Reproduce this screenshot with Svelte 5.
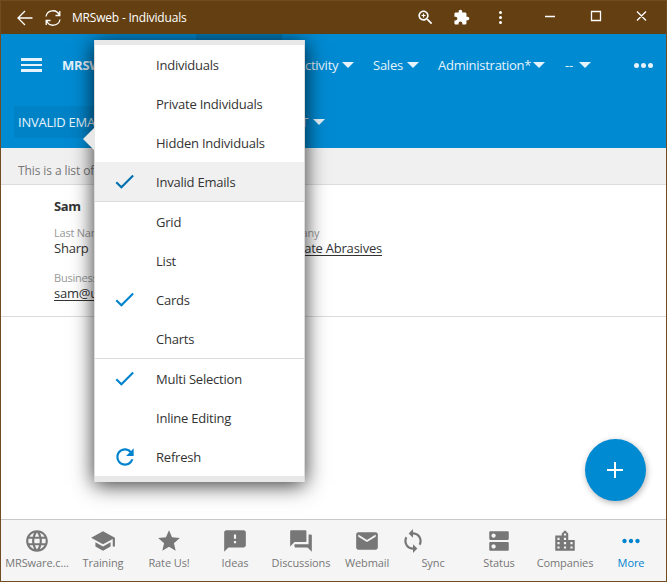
<script>
	const nav = [
		{ label: "Activity", cls: "activity" },
		{ label: "Sales", cls: "sales" },
		{ label: "Administration*", cls: "admin" },
		{ label: "--", cls: "blank" },
	];

	const groups = [
		[
			{ label: "Individuals" },
			{ label: "Private Individuals" },
			{ label: "Hidden Individuals" },
			{ label: "Invalid Emails", icon: "check", selected: true },
		],
		[
			{ label: "Grid" },
			{ label: "List" },
			{ label: "Cards", icon: "check" },
			{ label: "Charts" },
		],
		[
			{ label: "Multi Selection", icon: "check" },
			{ label: "Inline Editing" },
			{ label: "Refresh", icon: "refresh" },
		],
	];

	const icons = {
		check: "M9 16.17L4.83 12l-1.42 1.41L9 19 21 7l-1.41-1.41z",
		refresh:
			"M17.65 6.35C16.2 4.9 14.21 4 12 4c-4.42 0-7.99 3.58-7.99 8s3.57 8 7.99 8c3.73 0 6.84-2.55 7.73-6h-2.08c-.82 2.33-3.04 4-5.65 4-3.31 0-6-2.69-6-6s2.69-6 6-6c1.66 0 3.14.69 4.22 1.78L13 11h7V4l-2.35 2.35z",
		globe:
			"M11.99 2C6.47 2 2 6.48 2 12s4.47 10 9.99 10C17.52 22 22 17.52 22 12S17.52 2 11.99 2zm6.93 6h-2.95c-.32-1.25-.78-2.45-1.38-3.56 1.84.63 3.37 1.91 4.33 3.56zM12 4.04c.83 1.2 1.48 2.53 1.91 3.96h-3.82c.43-1.43 1.08-2.76 1.91-3.96zM4.26 14C4.1 13.36 4 12.69 4 12s.1-1.36.26-2h3.38c-.08.66-.14 1.32-.14 2 0 .68.06 1.34.14 2H4.26zm.82 2h2.95c.32 1.25.78 2.45 1.38 3.56-1.84-.63-3.37-1.9-4.33-3.56zm2.95-8H5.08c.96-1.66 2.49-2.93 4.33-3.56C8.81 5.55 8.35 6.75 8.03 8zM12 19.96c-.83-1.2-1.48-2.53-1.91-3.96h3.82c-.43 1.43-1.08 2.76-1.91 3.96zM14.34 14H9.66c-.09-.66-.16-1.32-.16-2 0-.68.07-1.35.16-2h4.68c.09.65.16 1.32.16 2 0 .68-.07 1.34-.16 2zm.25 5.56c.6-1.11 1.06-2.31 1.38-3.56h2.95c-.96 1.65-2.49 2.93-4.33 3.56zM16.36 14c.08-.66.14-1.32.14-2 0-.68-.06-1.34-.14-2h3.38c.16.64.26 1.31.26 2s-.1 1.36-.26 2h-3.38z",
		school: "M5 13.18v4L12 21l7-3.82v-4L12 17l-7-3.82zM12 3L1 9l11 6 9-4.91V17h2V9L12 3z",
		star: "M12 17.27L18.18 21l-1.64-7.03L22 9.24l-7.19-.61L12 2 9.19 8.63 2 9.24l5.46 4.73L5.82 21z",
		feedback:
			"M20 2H4c-1.1 0-1.99.9-1.99 2L2 22l4-4h14c1.1 0 2-.9 2-2V4c0-1.1-.9-2-2-2zm-7 12h-2v-2h2v2zm0-4h-2V6h2v4z",
		forum:
			"M21 6h-2v9H6v2c0 .55.45 1 1 1h11l4 4V7c0-.55-.45-1-1-1zm-4 6V3c0-.55-.45-1-1-1H3c-.55 0-1 .45-1 1v14l4-4h10c.55 0 1-.45 1-1z",
		mail: "M20 4H4c-1.1 0-1.99.9-1.99 2L2 18c0 1.1.9 2 2 2h16c1.1 0 2-.9 2-2V6c0-1.1-.9-2-2-2zm0 4l-8 5-8-5V6l8 5 8-5v2z",
		sync: "M12 4V1L8 5l4 4V6c3.31 0 6 2.69 6 6 0 1.01-.25 1.97-.7 2.8l1.46 1.46C19.54 15.03 20 13.57 20 12c0-4.42-3.58-8-8-8zm0 14c-3.31 0-6-2.69-6-6 0-1.01.25-1.97.7-2.8L5.24 7.74C4.46 8.97 4 10.43 4 12c0 4.42 3.58 8 8 8v3l4-4-4-4v3z",
		dns: "M20 13H4c-.55 0-1 .45-1 1v6c0 .55.45 1 1 1h16c.55 0 1-.45 1-1v-6c0-.55-.45-1-1-1zM7 19c-1.1 0-2-.9-2-2s.9-2 2-2 2 .9 2 2-.9 2-2 2zM20 3H4c-.55 0-1 .45-1 1v6c0 .55.45 1 1 1h16c.55 0 1-.45 1-1V4c0-.55-.45-1-1-1zM7 9c-1.1 0-2-.9-2-2s.9-2 2-2 2 .9 2 2-.9 2-2 2z",
		city: "M15 11V5l-3-3-3 3v2H3v14h18V11h-6zm-8 8H5v-2h2v2zm0-4H5v-2h2v2zm0-4H5V9h2v2zm6 8h-2v-2h2v2zm0-4h-2v-2h2v2zm0-4h-2V9h2v2zm0-4h-2V5h2v2zm6 12h-2v-2h2v2zm0-4h-2v-2h2v2z",
		more: "M6 10c-1.1 0-2 .9-2 2s.9 2 2 2 2-.9 2-2-.9-2-2-2zm12 0c-1.1 0-2 .9-2 2s.9 2 2 2 2-.9 2-2-.9-2-2-2zm-6 0c-1.1 0-2 .9-2 2s.9 2 2 2 2-.9 2-2-.9-2-2-2z",
		extension:
			"M20.5 11H19V7c0-1.1-.9-2-2-2h-4V3.5C13 2.12 11.88 1 10.5 1S8 2.12 8 3.5V5H4c-1.1 0-1.99.9-1.99 2v3.8H3.5c1.49 0 2.7 1.21 2.7 2.7s-1.21 2.7-2.7 2.7H2V20c0 1.1.9 2 2 2h3.8v-1.5c0-1.49 1.21-2.7 2.7-2.7 1.49 0 2.7 1.21 2.7 2.7V22H17c1.1 0 2-.9 2-2v-4h1.5c1.38 0 2.5-1.12 2.5-2.5S21.88 11 20.5 11z",
		zoom: "M15.5 14h-.79l-.28-.27C15.41 12.59 16 11.11 16 9.5 16 5.91 13.09 3 9.5 3S3 5.91 3 9.5 5.91 16 9.5 16c1.61 0 3.09-.59 4.23-1.57l.27.28v.79l5 4.99L20.49 19l-4.99-5zm-6 0C7.01 14 5 11.99 5 9.5S7.01 5 9.5 5 14 7.01 14 9.5 11.99 14 9.5 14zM10.25 7h-1.5v1.75H7v1.5h1.75V12h1.5v-1.75H12v-1.5h-1.75z",
	};

	const tabs = [
		{ label: "MRSware.c...", icon: "globe" },
		{ label: "Training", icon: "school" },
		{ label: "Rate Us!", icon: "star" },
		{ label: "Ideas", icon: "feedback" },
		{ label: "Discussions", icon: "forum" },
		{ label: "Webmail", icon: "mail" },
		{ label: "Sync", icon: "sync" },
		{ label: "Status", icon: "dns" },
		{ label: "Companies", icon: "city" },
		{ label: "More", icon: "more", active: true },
	];
</script>

{#snippet icon(name, size)}
	<svg class="icon" width={size} height={size} viewBox="0 0 24 24">
		<path d={icons[name]} />
	</svg>
{/snippet}

<div class="window">
	<header class="titlebar">
		<svg class="back" width="16" height="16" viewBox="0 0 16 16">
			<path d="M15.500 8H1M8 1L1 8l7 7" />
		</svg>
		<svg class="reload" width="16" height="16" viewBox="0 0 16 16">
			<path d="M1 6.500A7 7 0 0 1 14.300 5M14.800 1v4.500H10.500M15 9.500A7 7 0 0 1 1.700 11M1.200 15v-4.500H5.500" />
		</svg>
		<span class="title">MRSweb - Individuals</span>
		<span class="tool zoom">{@render icon("zoom", 19)}</span>
		<span class="tool puzzle">{@render icon("extension", 17)}</span>
		<span class="dots"><i></i><i></i><i></i></span>
		<svg class="controls" width="104" height="12" viewBox="0 0 104 12">
			<path d="M0 6.500h10M46.500 1.500h9v9h-9zM92 1.500l9 9M101 1.500l-9 9" />
		</svg>
	</header>

	<div class="toolbar">
		<div class="navbar">
			<span class="burger"><i></i><i></i><i></i></span>
			<strong class="brand">MRSWEB</strong>
			<span class="current"></span>
			<nav>
				{#each nav as item}
					<span class="nav {item.cls}">
						<span class="nav-label">{item.label}</span><i class="caret"></i>
					</span>
				{/each}
			</nav>
			<span class="overflow"><i></i><i></i><i></i></span>
		</div>
		<div class="actions">
			<span class="view">INVALID EMAILS</span>
			<span class="report">REPORT <i class="caret"></i></span>
		</div>
	</div>

	<div class="summary">This is a list of</div>

	<main>
		<article class="card">
			<h2>Sam</h2>
			<div class="fields">
				<div class="field">
					<label>Last Name</label>
					<span>Sharp</span>
				</div>
				<div class="field company">
					<label>Company</label>
					<span class="link">Ultimate Abrasives</span>
				</div>
				<div class="field">
					<label>Business</label>
					<span class="link">sam@ultimate</span>
				</div>
			</div>
		</article>
	</main>

	<footer>
		{#each tabs as tab}
			<div class="tab {tab.icon}" class:active={tab.active}>
				{@render icon(tab.icon, 26)}
				<span>{tab.label}</span>
			</div>
		{/each}
	</footer>

	<button class="add" aria-label="Add">
		<svg width="16" height="16" viewBox="0 0 16 16"><path d="M8 0v16M0 8h16" /></svg>
	</button>

	<div class="popup">
		<i class="pointer"></i>
		{#each groups as group}
			<ul>
				{#each group as item}
					<li class:selected={item.selected}>
						<span class="mark">
							{#if item.icon}{@render icon(item.icon, item.icon === "check" ? 25 : 26)}{/if}
						</span>
						<span>{item.label}</span>
					</li>
				{/each}
			</ul>
		{/each}
	</div>
</div>

<style>
	:global(body) {
		margin: 0;
	}

	.window {
		position: relative;
		box-sizing: border-box;
		width: 667px;
		height: 582px;
		overflow: hidden;
		display: flex;
		flex-direction: column;
		border: 1px solid #6f4d20;
		background: #fff;
		color: #333;
		font: 13px/18px "Open Sans", "Noto Sans", sans-serif;
		letter-spacing: -0.22px;
		white-space: nowrap;
	}

	svg {
		display: block;
		flex: none;
	}

	.icon {
		fill: currentColor;
	}

	.titlebar {
		position: relative;
		z-index: 2;
		display: flex;
		align-items: center;
		height: 33px;
		flex: none;
		background: #643f12;
		color: #fff;
	}

	.titlebar svg:not(.icon) {
		fill: none;
		stroke: #fff;
		stroke-width: 1.3;
	}

	.back {
		margin-left: 16px;
	}

	.reload {
		margin-left: 12px;
	}

	.title {
		width: 344px;
		margin-left: 11px;
		font-size: 12px;
		letter-spacing: -0.2px;
	}

	.puzzle {
		margin-left: 18px;
	}

	.dots {
		display: grid;
		gap: 2px;
		margin-left: 29px;
	}

	.dots i {
		width: 3px;
		height: 3px;
		border-radius: 50%;
		background: #fff;
	}

	.titlebar .controls {
		margin: 0 0 4px 43px;
		stroke-width: 1;
	}

	.toolbar {
		height: 114px;
		flex: none;
		background: #008ad2;
		color: #e6f3fb;
	}

	.navbar {
		display: flex;
		align-items: center;
		height: 62px;
	}

	.burger {
		display: grid;
		gap: 3px;
		width: 21px;
		margin-left: 20px;
	}

	.burger i {
		height: 2.5px;
		background: #e6f3fb;
	}

	.brand {
		width: 114px;
		margin-left: 20px;
	}

	.current {
		width: 86px;
		height: 62px;
		margin-left: 20px;
		background: #007bbc;
	}

	nav {
		display: flex;
		width: 337px;
		margin-left: 15px;
	}

	.nav {
		display: flex;
		align-items: center;
		justify-content: space-between;
		box-sizing: border-box;
	}

	.nav-label {
		letter-spacing: -0.25px;
	}

	.caret {
		display: inline-block;
		border: 6px solid transparent;
		border-top-color: #e6f3fb;
		border-bottom: 0;
	}

	.activity {
		width: 57px;
		margin-right: 19px;
	}

	.sales {
		width: 46px;
		margin-right: 19px;
	}

	.admin {
		width: 107px;
		margin-right: 20px;
	}

	.blank {
		width: 26px;
	}

	.overflow {
		display: flex;
		gap: 2px;
	}

	.overflow i {
		width: 5px;
		height: 5px;
		border-radius: 50%;
		background: #e6f3fb;
	}

	.actions {
		display: flex;
		align-items: center;
		height: 32px;
		margin: 10px 0 0 13px;
	}

	.view {
		width: 180px;
		padding-left: 4px;
		line-height: 32px;
		background: #0082c6;
		letter-spacing: -0.25px;
	}

	.report {
		display: flex;
		align-items: center;
		justify-content: space-between;
		width: 64px;
		margin-left: 63px;
	}

	.summary {
		height: 36px;
		flex: none;
		padding-left: 17px;
		border-bottom: 1px solid #dcdcdc;
		background: #f0f0f0;
		color: #777;
		font-size: 12px;
		line-height: 45px;
		letter-spacing: -0.1px;
	}

	main {
		flex: 1;
	}

	.card {
		box-sizing: border-box;
		height: 132px;
		padding: 12px 0 0 53px;
		border-bottom: 1px solid #dcdcdc;
	}

	h2 {
		margin: 0;
		font-size: 13px;
		line-height: 18px;
		letter-spacing: -0.4px;
	}

	.fields {
		display: grid;
		grid-template-columns: 218px 110px;
		row-gap: 14px;
		margin-top: 10px;
	}

	.field {
		display: flex;
		flex-direction: column;
		align-items: flex-start;
	}

	label {
		color: #999;
		font-size: 11px;
		line-height: 16px;
	}

	.field span {
		line-height: 15px;
	}

	.company span {
		align-self: flex-end;
	}

	.link {
		text-decoration: underline;
		text-underline-offset: 2px;
	}

	footer {
		display: grid;
		grid-template-columns: repeat(10, 66px);
		justify-content: center;
		box-sizing: border-box;
		height: 62px;
		padding: 8px 0 0 1px;
		border-top: 1px solid #c8c8c8;
		background: #f5f5f5;
		color: #777;
		font-size: 11px;
		line-height: 17px;
		letter-spacing: -0.1px;
	}

	.tab {
		display: flex;
		flex-direction: column;
		align-items: center;
	}

	.sync .icon {
		margin-right: 40px;
	}

	.active {
		color: #0083ce;
	}

	.add {
		position: absolute;
		left: 584px;
		top: 438px;
		display: flex;
		align-items: center;
		justify-content: center;
		width: 61px;
		height: 62px;
		padding: 0 1px 0 0;
		border: 0;
		border-radius: 50%;
		background: #008ad2;
		box-shadow: 1px 2px 6px rgba(0, 0, 0, 0.3);
	}

	.add path {
		stroke: #fff;
		stroke-width: 2;
	}

	.popup {
		position: absolute;
		left: 93px;
		top: 39px;
		z-index: 3;
		box-sizing: border-box;
		width: 211px;
		height: 442px;
		padding: 5px 0;
		border: solid #dcdcdc;
		border-width: 0 1px;
		background: #e8e8e8;
		box-shadow: 0 3px 20px rgba(0, 0, 0, 0.8);
		clip-path: inset(-6px -40px -40px);
	}

	.pointer {
		position: absolute;
		left: -12px;
		top: 87px;
		border: 12px solid transparent;
		border-left: 0;
		border-right-color: #e8e8e8;
	}

	ul {
		margin: 0;
		padding: 0;
		background: #fff;
		list-style: none;
	}

	ul + ul {
		border-top: 1px solid #dcdcdc;
	}

	li {
		display: flex;
		align-items: center;
		height: 39px;
	}

	.mark {
		width: 44px;
		padding-left: 17px;
		color: #0083ce;
	}

	.selected {
		background: #f0f0f0;
	}

	.selected .mark {
		color: #0070b0;
	}
</style>
